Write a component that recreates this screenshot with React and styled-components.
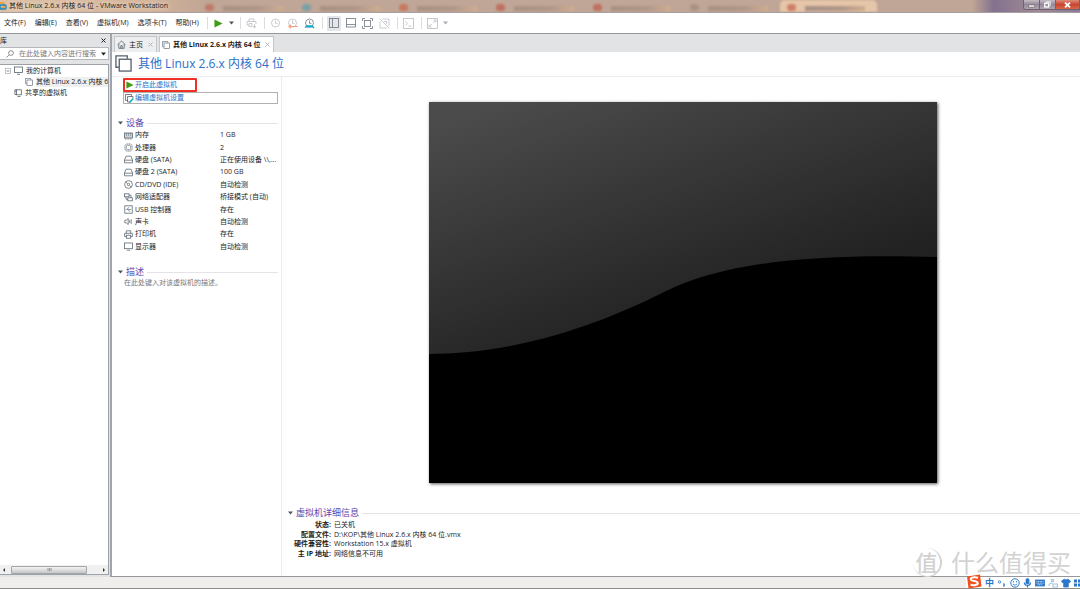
import { useState } from "react";
import styled, { createGlobalStyle } from "styled-components";

const GlobalStyle = createGlobalStyle`
    *, *::before, *::after {
        box-sizing: border-box;
    }

    body {
        margin: 0;
        font-family: "Open Sans", "Noto Sans CJK SC", sans-serif;
        font-size: 7px;
        line-height: 10px;
        color: #1c1c1c;
        background: #f0eded;
    }

    button, input {
        font: inherit;
        color: inherit;
        padding: 0;
        border: none;
        background: none;
    }

    svg {
        display: block;
        flex: none;
    }
`;

const Window = styled.div`
    position: relative;
    display: flex;
    flex-direction: column;
    min-height: 100vh;
    overflow: hidden;
`;

/* title bar */

const TitleBar = styled.header`
    position: relative;
    display: flex;
    justify-content: space-between;
    height: 13px;
    overflow: hidden;
    border-bottom: 1px solid #a8a0a0;
    background: linear-gradient(90deg, #dcc0a6 0%, #d3b299 14%, #c0a696 19%, #c0a696 90%, #83728f 92%, #a08a94 96%, #8b7a98 100%);
`;

const Glass = styled.div`
    position: absolute;
    inset: 0;
    display: flex;
    padding-left: 198px;
    filter: blur(1px);
`;

const GlassTab = styled.div`
    display: flex;
    align-items: flex-end;
    gap: 9px;
    flex: 0 0 11%;
    padding: 0 12px 1px 7px;
    border-radius: 5px 5px 0 0;
    background: ${props => (props.$lit ? "#e6c6a8" : "transparent")};
`;

const GlassDot = styled.span`
    width: 9px;
    height: 7px;
    border-radius: 4px;
    background: ${props => props.$color};
`;

const GlassText = styled.span`
    width: 60px;
    height: 5px;
    background: linear-gradient(90deg, #a89185, #b0978a 60%, #d0ae90);
`;

const TitleText = styled.h1`
    position: relative;
    display: flex;
    align-items: center;
    gap: 2px;
    margin: 0;
    font-size: 7px;
    font-weight: 400;
    text-shadow: 0 0 4px #f6e4d2, 0 0 6px #f6e4d2;
`;

const Caption = styled.div`
    position: relative;
    display: flex;
    height: 10px;
    border: 1px solid #6d6273;
    border-top: none;
    border-right: none;
    border-radius: 0 0 0 3px;
    overflow: hidden;
`;

const CaptionButton = styled.button`
    display: flex;
    align-items: center;
    justify-content: center;
    width: ${props => (props.$close ? 24 : 16)}px;
    border-right: 1px solid #6d6273;
    color: #fff;
    background: ${props => (props.$close
        ? "linear-gradient(#dd8c7c, #c8452f 50%, #d9674a)"
        : "linear-gradient(#c5bcc4, #94899a 50%, #b0a5ae)")};
`;

/* menus and toolbar */

const MenuBar = styled.nav`
    display: flex;
    align-items: center;
    height: 21px;
    padding-left: 4px;
    background: #fff;
    border-bottom: 1px solid #97979b;
`;

const Menus = styled.div`
    display: flex;
    gap: 9px;
    margin-right: 3px;
`;

const MenuButton = styled.button`
    white-space: nowrap;
`;

const ToolGroup = styled.div`
    display: flex;
    align-items: center;
    gap: 3px;
    height: 12px;
    margin-left: 5px;
    padding-left: 4px;
    border-left: 1px solid #dcdcdc;
    color: #6d7680;
`;

const ToolButton = styled.button`
    display: flex;
    align-items: center;
    justify-content: center;
    width: 14px;
    height: 15px;
    border-radius: 1px;
    color: ${props => (props.$dim ? "#b9bec4" : "inherit")};
    background: ${props => (props.$pressed ? "#e3e5e8" : "none")};
`;

const CaretButton = styled(ToolButton)`
    width: 6px;
`;

/* body */

const Body = styled.div`
    display: flex;
    flex: 1;
    background: #e2e3e5;
`;

const Library = styled.aside`
    display: flex;
    flex-direction: column;
    width: 109px;
    flex: none;
    padding-bottom: 2px;
`;

const LibraryHead = styled.div`
    display: flex;
    align-items: center;
    justify-content: space-between;
    height: 13px;
    padding-right: 2px;
`;

const IconButton = styled.button`
    display: flex;
    align-items: center;
    justify-content: center;
    width: 7px;
    height: 10px;
    color: ${props => props.$color || "#222"};
`;

const SearchBox = styled.label`
    display: flex;
    align-items: center;
    gap: 5px;
    height: 13px;
    padding: 0 2px 0 6px;
    background: #fff;
    border: 1px solid #b4b7bc;
    border-left: none;
    color: #777;
`;

const SearchInput = styled.input`
    flex: 1;
    min-width: 0;
    outline: none;

    &::placeholder {
        color: #777;
        opacity: 1;
    }
`;

const TreeBox = styled.div`
    display: flex;
    flex-direction: column;
    flex: 1;
    margin-top: 4px;
    background: #fff;
    border: 1px solid #9da1a8;
    border-left: none;
    overflow: hidden;
`;

const Tree = styled.ul`
    flex: 1;
    margin: 0;
    padding: 0;
    list-style: none;
`;

const TreeItem = styled.li`
    display: flex;
    align-items: center;
    gap: 3px;
    height: 11px;
    padding-left: ${props => props.$indent}px;
    white-space: nowrap;

    svg {
        color: #55616d;
    }
`;

const TreeLabel = styled.span`
    background: ${props => (props.$selected ? "#efefef" : "none")};
`;

const ScrollBar = styled.div`
    display: flex;
    align-items: center;
    justify-content: space-between;
    height: 9px;
    padding: 0 2px;
    background: #f0f0f0;
`;

const Thumb = styled.div`
    display: flex;
    align-items: center;
    justify-content: center;
    width: 76px;
    height: 8px;
    margin-right: 10px;
    border: 1px solid #a5a5a5;
    border-radius: 1px;
    background: linear-gradient(#f2f2f2, #dedede 50%, #c6c6c6);
`;

const Workspace = styled.main`
    display: flex;
    flex-direction: column;
    flex: 1;
    min-width: 0;
    margin-left: 1px;
    border-left: 2px solid #a2a4ac;
    border-bottom: 1px solid #97979b;
`;

const Tabs = styled.div`
    display: flex;
    align-items: flex-end;
    gap: 2px;
    height: 18px;
    padding-left: 2px;
`;

const Tab = styled.div`
    display: flex;
    align-items: center;
    gap: 2px;
    height: 16px;
    padding: 0 2px;
    border: 1px solid #c3c6ca;
    border-bottom: none;
    font-weight: ${props => (props.$active ? 700 : 400)};
    background: ${props => (props.$active ? "#fff" : "#eceef0")};
    white-space: nowrap;
`;

const TabLabel = styled.button`
    display: flex;
    align-items: center;
    gap: 3px;
    margin-right: 2px;
`;

const Page = styled.div`
    display: flex;
    flex-direction: column;
    flex: 1;
    background: #fff;
`;

const PageHead = styled.div`
    display: flex;
    align-items: center;
    gap: 6px;
    height: 25px;
    padding: 0 0 1px 3px;
    border-bottom: 1px solid #ececec;
`;

const PageTitle = styled.h2`
    margin: 0;
    font-size: 12px;
    line-height: 18px;
    font-weight: 400;
    color: #2a6fc9;
`;

const Columns = styled.div`
    display: flex;
    flex: 1;
`;

const Summary = styled.div`
    width: 170px;
    flex: none;
    padding: 1px 3px 0 6px;
    border-right: 1px solid #ececec;
`;

const Commands = styled.div`
    display: flex;
    flex-direction: column;
    align-items: flex-start;
    padding-left: 5px;
`;

const Command = styled.button`
    display: flex;
    align-items: center;
    gap: 1px;
    width: 100%;
    height: 12px;
    padding-left: 1px;
    border: 1px solid #b0b0b0;
    color: #2a6fc9;
`;

const PowerCommand = styled(Command)`
    width: 74px;
    height: 14px;
    border: 2px solid #ee3124;
    border-radius: 1px;
`;

const SectionHead = styled.h3`
    display: flex;
    align-items: center;
    gap: 3px;
    height: 12px;
    margin: 0;
    font-size: 9px;
    font-weight: 400;
    color: #5846ae;
    white-space: nowrap;

    &::after {
        content: "";
        flex: 1;
        height: 1px;
        background: #e4e4e8;
    }
`;

const Section = styled.section`
    margin-top: 13px;
`;

const DeviceTable = styled.table`
    width: 100%;
    height: 124px;
    padding-left: 6px;
    border-spacing: 0;
    table-layout: fixed;
    white-space: nowrap;

    td, th {
        padding: 0;
        font-weight: 400;
        text-align: left;
    }

    th {
        width: 96px;
    }

    svg {
        color: #5d6974;
    }
`;

const DeviceName = styled.span`
    display: flex;
    align-items: center;
    gap: 2px;
`;

const Note = styled.p`
    margin: 0;
    padding-left: 6px;
    color: #777;
`;

const Preview = styled.div`
    display: flex;
    flex-direction: column;
    flex: 1;
    min-width: 0;
`;

const ScreenArea = styled.div`
    display: flex;
    align-items: center;
    flex: 1;
    padding: 24px 143px 24px 147px;
`;

const Screen = styled.svg`
    flex: 1;
    min-width: 0;
    box-shadow: 1px 1px 3px #555;
`;

const Details = styled.section`
    padding: 0 0 18px 6px;
`;

const DetailList = styled.dl`
    display: grid;
    grid-template-columns: 43px 1fr;
    grid-template-rows: repeat(4, 1fr);
    align-items: center;
    column-gap: 3px;
    height: 38px;
    margin: 1px 0 0;
    line-height: 9px;
    white-space: nowrap;

    dt {
        justify-self: end;
        font-weight: 700;
    }

    dd {
        margin: 0;
    }
`;

const StatusBar = styled.footer`
    height: 12px;
    background: #f0eded;
    border-bottom: 1px solid #8f8d8b;
`;

/* floating over the window */

const Watermark = styled.div`
    position: absolute;
    right: 9px;
    bottom: 12px;
    display: flex;
    align-items: center;
    gap: 9px;
    font-size: 24px;
    line-height: 24px;
    color: #d2d2d2;
`;

const Seal = styled.span`
    display: flex;
    align-items: center;
    justify-content: center;
    width: 29px;
    height: 29px;
    border-radius: 50%;
    border-right: 2px solid #d2d2d2;
    border-bottom: 1px solid #d2d2d2;
    font-size: 22px;
    font-weight: 500;
`;

const InputBar = styled.div`
    position: absolute;
    right: 0;
    bottom: 1px;
    display: flex;
    align-items: center;
    gap: 3px;
    height: 11px;
    padding-left: 19px;
    background: #fff;
    color: #2b76c8;
`;

const InputLogo = styled.svg`
    position: absolute;
    left: 0;
    bottom: -1px;
`;

const ImeMode = styled.span`
    font-size: 9px;
    font-weight: 700;
`;

function Icon({ size = 10, width, children }) {
    return (
        <svg
            width={width || size}
            height={size}
            viewBox={`0 0 ${width || size} ${size}`}
            fill="none"
            stroke="currentColor"
            strokeWidth="0.8"
            aria-hidden="true"
        >
            {children}
        </svg>
    );
}

const Caret = ({ color = "#4b5560" }) => (
    <Icon size={4} width={5}><path d="M0 0.5h5L2.5 3.5z" fill={color} stroke="none" /></Icon>
);

const Cross = () => (
    <Icon size={5}><path d="M0.5 0.5l4 4M4.5 0.5l-4 4" strokeWidth="1" /></Icon>
);

const Play = ({ size = 10 }) => (
    <svg width={size} height={size} viewBox="0 0 10 10" aria-hidden="true">
        <path d="M0.5 0.5L9.5 5L0.5 9.5z" fill="#3f9c14" />
    </svg>
);

const VmIcon = ({ size = 9 }) => (
    <svg width={size} height={size} viewBox="0 0 18 18" fill="none" stroke="#55616d" strokeWidth="1.4" aria-hidden="true">
        <path d="M4 13H1V1h12v3" />
        <rect x="4.5" y="4.5" width="12.5" height="12.5" fill="#fff" />
    </svg>
);

const Monitor = () => (
    <Icon size={9}>
        <rect x="0.5" y="1" width="8" height="5.5" />
        <path d="M3 8.3h3" />
    </Icon>
);

const Clock = ({ children }) => (
    <Icon size={11}>
        <circle cx="5.5" cy="5" r="4" />
        <path d="M5.5 2.5V5.3H7.5" />
        {children}
    </Icon>
);

const deviceIcons = {
    memory: <><rect x="0.5" y="2" width="8" height="5" fill="#cdd2d6" /><path d="M2.5 2v3M4.5 2v3M6.5 2v3M1 8h7" strokeDasharray="1 0.6" /></>,
    cpu: <><rect x="1" y="1" width="7" height="7" rx="2" strokeDasharray="1.4 0.4" /><rect x="2.4" y="2.4" width="4.2" height="4.2" rx="1" strokeWidth="0.6" /></>,
    disk: <path d="M0.5 5L2 1.2h5L8.5 5v2.8h-8zM0.5 5.2h8" />,
    cd: <><circle cx="4.5" cy="4.5" r="3.9" /><circle cx="4.5" cy="4.5" r="1.2" /><path d="M2 2l1.6 1.6M5.4 5.4L7 7" /></>,
    net: <><rect x="0.5" y="0.8" width="4.5" height="3" /><rect x="3.8" y="4.8" width="4.5" height="3" fill="#fff" /><path d="M2 3.8v2.5h1.8M5 2.2h2v2.6" /></>,
    usb: <><rect x="0.8" y="0.8" width="7.4" height="7.4" /><path d="M2 4.5h5M3 4.5l1-1.7h1.2M4 4.5l1 1.7h1" strokeWidth="0.6" /></>,
    sound: <path d="M0.8 3.2h1.5L4.2 1.4v6.2L2.3 5.8H0.8zM5.7 3.2v2.6M7.2 2.2v4.6" />,
    printer: <><path d="M2.3 3.3V0.8h4.4v2.5M2.3 6.5H0.6V3.3h7.8v3.2H6.7" /><rect x="2.3" y="5.2" width="4.4" height="3" /></>,
    display: <><rect x="0.5" y="1" width="8" height="5.7" /><path d="M2.8 8.2h3.4" /></>,
};

const devices = [
    ["memory", "内存", "1 GB"],
    ["cpu", "处理器", "2"],
    ["disk", "硬盘 (SATA)", "正在使用设备 \\\\,..."],
    ["disk", "硬盘 2 (SATA)", "100 GB"],
    ["cd", "CD/DVD (IDE)", "自动检测"],
    ["net", "网络适配器", "桥接模式 (自动)"],
    ["usb", "USB 控制器", "存在"],
    ["sound", "声卡", "自动检测"],
    ["printer", "打印机", "存在"],
    ["display", "显示器", "自动检测"],
];

const details = [
    ["状态:", "已关机"],
    ["配置文件:", "D:\\KOP\\其他 Linux 2.6.x 内核 64 位.vmx"],
    ["硬件兼容性:", "Workstation 15.x 虚拟机"],
    ["主 IP 地址:", "网络信息不可用"],
];

const menus = ["文件(F)", "编辑(E)", "查看(V)", "虚拟机(M)", "选项卡(T)", "帮助(H)"];
const glassDots = ["#c07a68", "#7da0a8", "#c87860", "#c07060", "#c07060", "#a99285", "#cf7f68"];
const vmName = "其他 Linux 2.6.x 内核 64 位";

function Title() {
    return (
        <TitleBar>
            <Glass>
                {glassDots.map((color, i) => (
                    <GlassTab key={i} $lit={i === 6}>
                        <GlassDot $color={color} />
                        <GlassText />
                    </GlassTab>
                ))}
            </Glass>
            <TitleText>
                <Icon size={8} width={7}>
                    <rect x="-2" y="1" width="6" height="5" rx="1" stroke="#f09a1a" strokeWidth="1.4" />
                    <rect x="0" y="3" width="6" height="4" rx="1" stroke="#1787c0" strokeWidth="1.4" />
                </Icon>
                {vmName} - VMware Workstation
            </TitleText>
            <Caption>
                <CaptionButton aria-label="最小化">
                    <Icon size={6} width={7}><rect x="0.5" y="3" width="6" height="2" fill="#fff" stroke="#555" strokeWidth="0.5" /></Icon>
                </CaptionButton>
                <CaptionButton aria-label="还原">
                    <Icon size={7}><path d="M2.5 2V0.8h3.8v3.6H5" /><rect x="0.8" y="2.2" width="3.8" height="3.8" strokeWidth="1.3" /></Icon>
                </CaptionButton>
                <CaptionButton $close aria-label="关闭">
                    <Icon size={6} width={7}><path d="M1 0.7l5 4.6M6 0.7L1 5.3" strokeWidth="1.8" /></Icon>
                </CaptionButton>
            </Caption>
        </TitleBar>
    );
}

function Toolbar() {
    const [showLibrary, setShowLibrary] = useState(true);

    return (
        <MenuBar>
            <Menus>
                {menus.map((name) => <MenuButton key={name}>{name}</MenuButton>)}
            </Menus>
            <ToolGroup>
                <ToolButton aria-label="开机"><Play size={9} /></ToolButton>
                <CaretButton aria-label="电源选项"><Caret /></CaretButton>
            </ToolGroup>
            <ToolGroup>
                <ToolButton $dim aria-label="发送按键">
                    <Icon size={11}>
                        <path d="M3 3.5V1h5v2.5M3 7H1V3.5h9V6M3 5.5h3v3H3z" />
                        <path d="M8.5 6v4M7 8l1.5 2L10 8" />
                    </Icon>
                </ToolButton>
            </ToolGroup>
            <ToolGroup>
                <ToolButton $dim aria-label="拍摄快照"><Clock /></ToolButton>
                <ToolButton $dim aria-label="恢复快照">
                    <Clock><path d="M10.5 8.5H2M4 6.8L2 8.5l2 1.8" stroke="#f0a080" strokeWidth="1.2" /></Clock>
                </ToolButton>
                <ToolButton aria-label="管理快照">
                    <Clock><path d="M1 9.5l2-1.5h5l2 2M2 8.8h7" stroke="#12a8c4" strokeWidth="1.4" /></Clock>
                </ToolButton>
            </ToolGroup>
            <ToolGroup>
                <ToolButton
                    aria-label="显示或隐藏库"
                    $pressed={showLibrary}
                    onClick={() => setShowLibrary(!showLibrary)}
                >
                    <Icon size={10}><rect x="0.5" y="0.5" width="9" height="9" /><path d="M3.5 0.5v9" /></Icon>
                </ToolButton>
                <ToolButton aria-label="缩略图栏">
                    <Icon size={10}><rect x="0.5" y="0.5" width="9" height="8.5" /><path d="M0.5 6.5h9" /></Icon>
                </ToolButton>
                <ToolButton aria-label="全屏">
                    <Icon size={11}><path d="M0.5 3V0.5H3M8 0.5h2.5V3M10.5 8v2.5H8M3 10.5H0.5V8" /><rect x="2.5" y="2.5" width="6" height="6" /></Icon>
                </ToolButton>
                <ToolButton $dim aria-label="Unity">
                    <Icon size={11}><path d="M3.5 1H10v6.5M8 10H1V3.5M0.8 0.8l9.4 9.4" /><path d="M5 3.5h2.5V6" /></Icon>
                </ToolButton>
            </ToolGroup>
            <ToolGroup>
                <ToolButton $dim aria-label="控制台">
                    <Icon size={11}><rect x="0.5" y="0.5" width="10" height="10" /><path d="M2.5 3.5l2 2-2 2M5.5 8h3" /></Icon>
                </ToolButton>
            </ToolGroup>
            <ToolGroup>
                <ToolButton $dim aria-label="拉伸">
                    <Icon size={11}><rect x="0.5" y="0.5" width="10" height="10" /><path d="M6 5l3-3M6.5 2H9v2.5M5 6L2 9M2 6.5V9h2.5" /></Icon>
                </ToolButton>
                <CaretButton aria-label="拉伸选项"><Caret color="#a8aeb4" /></CaretButton>
            </ToolGroup>
        </MenuBar>
    );
}

function LibraryPanel() {
    return (
        <Library>
            <LibraryHead>
                <span>库</span>
                <IconButton aria-label="关闭库"><Cross /></IconButton>
            </LibraryHead>
            <SearchBox>
                <Icon size={8}><circle cx="5" cy="3" r="2.4" /><path d="M3.2 4.8L0.5 7.5" /></Icon>
                <SearchInput type="text" aria-label="搜索" placeholder="在此处键入内容进行搜索" />
                <Caret color="#222" />
            </SearchBox>
            <TreeBox>
                <Tree>
                    <TreeItem $indent={5}>
                        <Icon size={6}><rect x="0.5" y="0.5" width="5" height="5" stroke="#b0b4ba" /><path d="M1.7 3h2.6" stroke="#667" /></Icon>
                        <Monitor />
                        <TreeLabel>我的计算机</TreeLabel>
                    </TreeItem>
                    <TreeItem $indent={25}>
                        <VmIcon size={8} />
                        <TreeLabel $selected>{vmName}</TreeLabel>
                    </TreeItem>
                    <TreeItem $indent={14}>
                        <Icon size={8}><rect x="2.5" y="0.8" width="4.8" height="5" /><path d="M2.5 2H0.9v-1.2h1.6M0.9 2v3.5h1.6M3.5 7.5h3" /></Icon>
                        <TreeLabel>共享的虚拟机</TreeLabel>
                    </TreeItem>
                </Tree>
                <ScrollBar>
                    <Icon size={4}><path d="M3 0L1 2l2 2z" fill="#333" stroke="none" /></Icon>
                    <Thumb><Icon size={3} width={5}><path d="M1 0v3M2.5 0v3M4 0v3" stroke="#666" strokeWidth="0.6" /></Icon></Thumb>
                    <Icon size={4}><path d="M1 0l2 2-2 2z" fill="#333" stroke="none" /></Icon>
                </ScrollBar>
            </TreeBox>
        </Library>
    );
}

function SummaryColumn() {
    return (
        <Summary>
            <Commands>
                <PowerCommand><Play size={8} />开启此虚拟机</PowerCommand>
                <Command>
                    <Icon size={9}>
                        <path d="M2.5 6.5h-2v-6h6v2" stroke="#55616d" />
                        <path d="M5 8H2.5V2.5H8V4" stroke="#55616d" />
                        <path d="M4.5 8.5L8.3 4.5" stroke="#12a8c4" strokeWidth="1.6" />
                    </Icon>
                    编辑虚拟机设置
                </Command>
            </Commands>
            <Section>
                <SectionHead><Caret />设备</SectionHead>
                <DeviceTable>
                    <tbody>
                        {devices.map(([icon, name, value]) => (
                            <tr key={name}>
                                <th scope="row">
                                    <DeviceName>
                                        <Icon size={9}>{deviceIcons[icon]}</Icon>
                                        {name}
                                    </DeviceName>
                                </th>
                                <td>{value}</td>
                            </tr>
                        ))}
                    </tbody>
                </DeviceTable>
            </Section>
            <Section>
                <SectionHead><Caret />描述</SectionHead>
                <Note>在此处键入对该虚拟机的描述。</Note>
            </Section>
        </Summary>
    );
}

function ScreenPreview() {
    return (
        <Preview>
            <ScreenArea>
                <Screen viewBox="0 0 508 381" role="img" aria-label="虚拟机屏幕">
                    <defs>
                        <linearGradient id="shade" gradientUnits="userSpaceOnUse" x1="0" y1="0" x2="110" y2="330">
                            <stop offset="0.07" stopColor="#4b4b4b" />
                            <stop offset="0.75" stopColor="#262626" />
                            <stop offset="1" stopColor="#1b1b1b" />
                        </linearGradient>
                    </defs>
                    <rect width="508" height="381" fill="#000" />
                    <path
                        d="M0 0H508V155C370 151 290 163 235 190C150 233 70 252 0 252z"
                        fill="url(#shade)"
                    />
                </Screen>
            </ScreenArea>
            <Details>
                <SectionHead><Caret />虚拟机详细信息</SectionHead>
                <DetailList>
                    {details.map(([term, value]) => [
                        <dt key={term}>{term}</dt>,
                        <dd key={value}>{value}</dd>,
                    ])}
                </DetailList>
            </Details>
        </Preview>
    );
}

function InputMethodBar() {
    return (
        <InputBar>
            <InputLogo width="16" height="15" viewBox="0 0 16 15" aria-hidden="true">
                <path d="M1 2.5L14 0.5L15.5 12.5L2.5 14.5z" fill="#f0501e" />
                <path d="M12 3.8C8 2.8 4.5 3.6 4.8 5.4C5.2 7.4 11.6 6.8 11.8 9C12 11 8 11.6 4.5 10.8" fill="none" stroke="#fff" strokeWidth="2" />
            </InputLogo>
            <ImeMode>中</ImeMode>
            <Icon size={10}><circle cx="2.5" cy="4" r="1.2" /><path d="M6.5 5.5q1.5 1 0 3" strokeWidth="1.4" /></Icon>
            <Icon size={10}>
                <circle cx="5" cy="5" r="4.2" strokeWidth="1" />
                <path d="M3.5 3v1.5M6.5 3v1.5M2.8 6q2.2 2.4 4.4 0" />
            </Icon>
            <Icon size={10} width={9}>
                <rect x="3" y="0.5" width="3" height="5.5" rx="1.5" fill="currentColor" />
                <path d="M1.5 4.5q0 3 3 3t3-3M4.5 7.5v2" strokeWidth="1.2" />
            </Icon>
            <Icon size={8} width={10}>
                <rect x="0.5" y="1" width="9" height="6" fill="currentColor" />
                <path d="M1.5 2.6h7M1.5 4.2h7M2.5 5.8h5" stroke="#fff" strokeDasharray="1 0.6" />
            </Icon>
            <Icon size={10}>
                <path d="M3.5 1.5h2v2h-2zM1 8q0-3 3.5-3M5 6h4.5v3H5z" stroke="#a9c2de" strokeWidth="1.2" />
            </Icon>
            <Icon size={10}>
                <path d="M3.2 1.2L0.5 3l1.2 2 1-0.5V9h4.6V4.5l1 0.5L9.5 3 6.8 1.2Q5 2.6 3.2 1.2z" fill="currentColor" />
            </Icon>
            <Icon size={8} width={6}>
                <path d="M0 0.5h3v3H0zM4 0.5h2v3H4zM0 4.5h3v3H0zM4 4.5h2v3H4z" fill="currentColor" stroke="none" />
            </Icon>
        </InputBar>
    );
}

function App() {
    return (
        <Window>
            <GlobalStyle />
            <Title />
            <Toolbar />
            <Body>
                <LibraryPanel />
                <Workspace>
                    <Tabs>
                        <Tab>
                            <TabLabel>
                                <Icon size={9}><path d="M0.5 4.8L4.5 1l4 3.8M1.8 4v4.3h5.4V4M3.8 8.3V5.6h1.4v2.7" stroke="#55616d" /></Icon>
                                主页
                            </TabLabel>
                            <IconButton $color="#b5b8bc" aria-label="关闭主页"><Cross /></IconButton>
                        </Tab>
                        <Tab $active>
                            <TabLabel><VmIcon size={8} />{vmName}</TabLabel>
                            <IconButton $color="#b5b8bc" aria-label="关闭标签"><Cross /></IconButton>
                        </Tab>
                    </Tabs>
                    <Page>
                        <PageHead>
                            <VmIcon size={17} />
                            <PageTitle>{vmName}</PageTitle>
                        </PageHead>
                        <Columns>
                            <SummaryColumn />
                            <ScreenPreview />
                        </Columns>
                    </Page>
                </Workspace>
            </Body>
            <StatusBar />
            <Watermark><Seal>值</Seal>什么值得买</Watermark>
            <InputMethodBar />
        </Window>
    );
}

export default App;
